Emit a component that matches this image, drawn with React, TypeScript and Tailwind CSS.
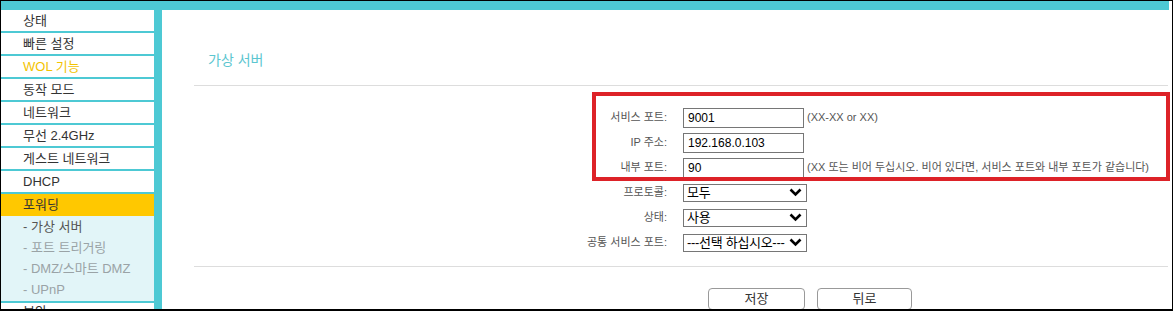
import React from "react";

const FONT = { fontFamily: '"Liberation Sans", "Noto Sans CJK KR", sans-serif' };

const menu = [
  { label: "상태" },
  { label: "빠른 설정" },
  { label: "WOL 기능", color: "text-[#f3c300]" },
  { label: "동작 모드" },
  { label: "네트워크" },
  { label: "무선 2.4GHz" },
  { label: "게스트 네트워크" },
  { label: "DHCP" },
];

const subMenu = [
  { label: "- 가상 서버", active: true },
  { label: "- 포트 트리거링" },
  { label: "- DMZ/스마트 DMZ" },
  { label: "- UPnP" },
];

const Chevron = () => (
  <svg width="13" height="9" viewBox="0 0 13 9" className="shrink-0">
    <polyline points="1.5,1.5 6.5,6.5 11.5,1.5" fill="none" stroke="#000" strokeWidth="2.6" />
  </svg>
);

const Select = ({ value }: { value: string }) => (
  <div className="flex h-[18px] w-[124px] items-center justify-between overflow-hidden border border-[#767676] bg-white pl-[3px] pr-[4px] text-[13px] leading-none whitespace-nowrap text-black">
    <span className="tracking-[-0.3px]">{value}</span>
    <Chevron />
  </div>
);

const Input = ({ value }: { value: string }) => (
  <div className="flex h-[20px] w-[121px] items-center border border-[#767676] bg-white pl-[4px] text-[12px] text-black">
    {value}
  </div>
);

const Row = ({ label, children }: { label: string; children: React.ReactNode }) => (
  <div className="flex h-[25px] items-center">
    <div className="w-[489px] shrink-0 pr-[16px] text-right text-[11px] whitespace-nowrap text-[#555]">{label}</div>
    {children}
  </div>
);

export default function App() {
  return (
    <div
      className="relative h-[311px] w-[1173px] overflow-hidden border-x border-t border-b-2 border-black bg-white"
      style={FONT}
    >
      <div className="flex h-full flex-col pr-[3px]">
        <div className="h-[9px] shrink-0 bg-[#4dc9d4]" />
        <div className="flex flex-1">
          {/* sidebar */}
          <div className="w-[153px] shrink-0 text-[13px] text-[#333]">
            {menu.map((m) => (
              <div
                key={m.label}
                className={`flex h-[23px] items-center border-b-2 border-[#4dc9d4] pl-[22px] ${m.color ?? ""}`}
              >
                {m.label}
              </div>
            ))}
            <div className="flex h-[22px] items-center bg-[#ffc800] pl-[22px] text-[#333]">포워딩</div>
            <div className="border-b-2 border-[#4dc9d4] bg-[#e2f5f8] pb-[1px]">
              {subMenu.map((s) => (
                <div
                  key={s.label}
                  className={`flex h-[21px] items-center pl-[22px] ${s.active ? "text-[#555]" : "text-[#9aa3a6]"}`}
                >
                  {s.label}
                </div>
              ))}
            </div>
            <div className="flex h-[23px] items-start pt-[2px] pl-[22px] leading-[14px]">보안</div>
          </div>
          <div className="w-[8px] shrink-0 bg-[#4dc9d4]" />

          {/* content */}
          <div className="flex-1 pl-[32px] pr-[1px]">
            <div className="border-b border-[#dddddd] pt-[40px] pb-[15px] pl-[14px]">
              <div className="h-[20px] text-[14px] leading-[20px] text-[#5cc6d0]">가상 서버</div>
            </div>
            <div className="border-b border-[#dddddd] pt-[19px] pb-[11px]">
              <Row label="서비스 포트:">
                <Input value="9001" />
                <span className="ml-[3px] text-[11px] whitespace-nowrap text-[#555]">(XX-XX or XX)</span>
              </Row>
              <Row label="IP 주소:">
                <Input value="192.168.0.103" />
              </Row>
              <Row label="내부 포트:">
                <Input value="90" />
                <span className="ml-[3px] text-[11px] whitespace-nowrap text-[#555]">
                  (XX 또는 비어 두십시오. 비어 있다면, 서비스 포트와 내부 포트가 같습니다)
                </span>
              </Row>
              <Row label="프로토콜:">
                <Select value="모두" />
              </Row>
              <Row label="상태:">
                <Select value="사용" />
              </Row>
              <Row label="공통 서비스 포트:">
                <Select value="---선택 하십시오---" />
              </Row>
            </div>
            <div className="flex gap-[12px] pt-[21px] pl-[514px]">
              <button className="h-[22px] w-[97px] rounded-[4px] border border-[#999] bg-white text-[13px] text-[#333]">
                저장
              </button>
              <button className="h-[22px] w-[95px] rounded-[4px] border border-[#999] bg-white text-[13px] text-[#333]">
                뒤로
              </button>
            </div>
          </div>
        </div>
      </div>

      {/* annotation box */}
      <div className="pointer-events-none absolute left-[591px] top-[91px] h-[89px] w-[578px] border-4 border-[#dd2228]" />
    </div>
  );
}
